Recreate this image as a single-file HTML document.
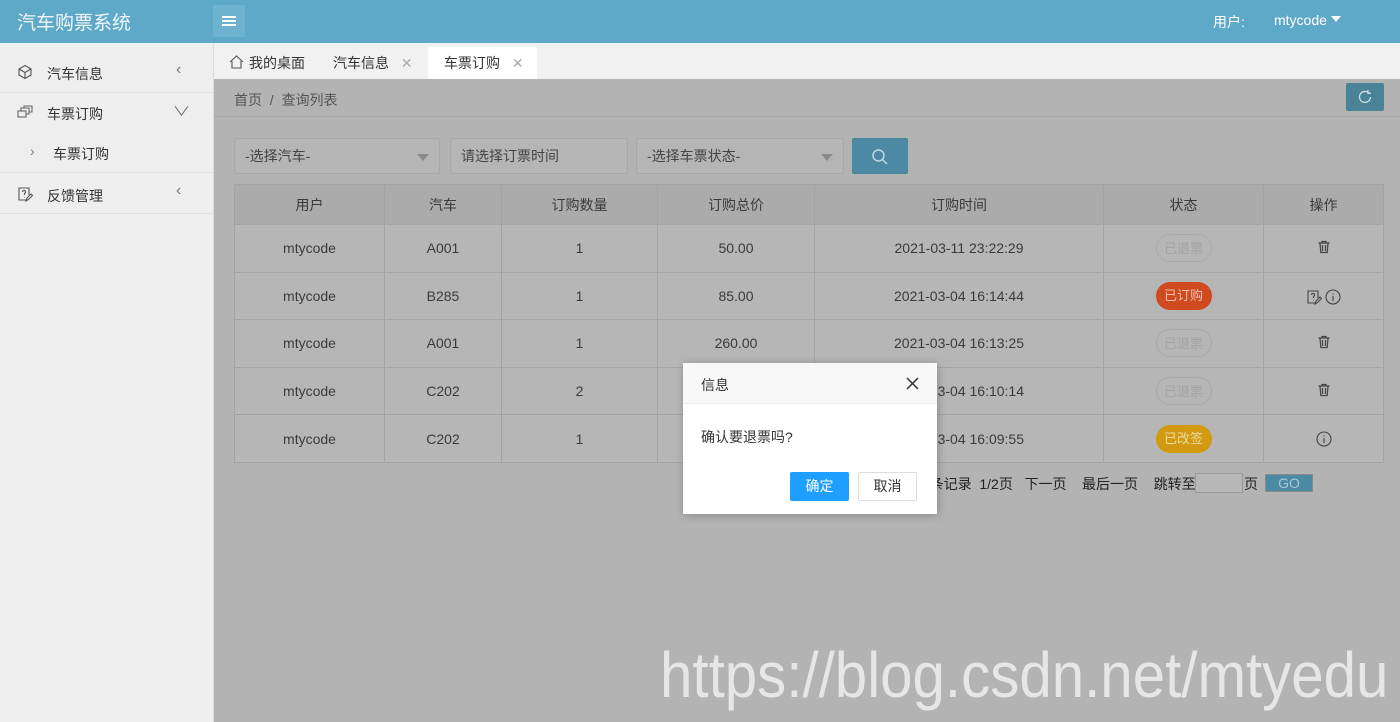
<!DOCTYPE html>
<html><head><meta charset="utf-8">
<style>
*{box-sizing:border-box;margin:0;padding:0}
body{width:1400px;height:722px;overflow:hidden;position:relative;font-family:"Liberation Sans","Noto Sans CJK SC",sans-serif;font-size:14px;color:#333;background:#b3b3b3}
.abs{position:absolute}
#hdr{left:0;top:0;width:1400px;height:43px;background:#5fa9c8}
#side{left:0;top:43px;width:214px;height:679px;background:#eeeeee;border-right:1px solid #ddd}
.mi{position:absolute;left:0;width:213px;border-bottom:1px solid #e0e0e0;font-size:14px;color:#333}
#tabs{left:214px;top:43px;width:1186px;height:36px;background:#f1f1f1}
.tab{position:absolute;top:4px;height:32px;line-height:32px;font-size:14px;color:#333}
#content{left:214px;top:79px;width:1186px;height:643px;background:#b3b3b3}
table{position:absolute;left:234px;top:184px;border-collapse:collapse;width:1150px}
td,th{border:1px solid #a3a3a3;text-align:center;font-weight:normal;color:#3a3a3a;font-size:14px}
th{height:40px;background:#ababab}
td{height:47.6px;background:#b6b6b6}
.badge{display:inline-block;width:56px;height:28px;line-height:28px;border-radius:14px;font-size:13px}
.inp{position:absolute;top:138px;height:36px;border:1px solid #a8a8a8;background:#b5b5b5;color:#444;font-size:14px;line-height:34px;padding-left:10px;border-radius:2px}
.tri{position:absolute;right:10px;top:15px;width:0;height:0;border-left:6px solid transparent;border-right:6px solid transparent;border-top:7px solid #8a8a8a}
</style></head><body>
<div id="hdr" class="abs">
 <div class="abs" style="left:17px;top:8px;color:#f0f7fa;font-size:19px">汽车购票系统</div>
 <div class="abs" style="left:213px;top:5px;width:32px;height:32px;background:#6db3d0">
  <div class="abs" style="left:9px;top:11px;width:14px;height:2px;background:#fff"></div>
  <div class="abs" style="left:9px;top:15px;width:14px;height:2px;background:#fff"></div>
  <div class="abs" style="left:9px;top:19px;width:14px;height:2px;background:#fff"></div>
 </div>
 <div class="abs" style="left:1213px;top:12px;color:#fff;font-size:14px">用户:</div>
 <div class="abs" style="left:1274px;top:12px;color:#fff;font-size:14px">mtycode</div>
 <div class="abs" style="left:1331px;top:16px;border-left:5px solid transparent;border-right:5px solid transparent;border-top:6px solid #fff"></div>
</div>
<div id="side" class="abs">
 <div class="mi" style="top:10px;height:40px">
  <svg class="abs" style="left:17px;top:11px" width="16" height="16" viewBox="0 0 16 16" fill="none" stroke="#555" stroke-width="1.1"><path d="M8 1.5 14 5v6l-6 3.5L2 11V5z M2 5l6 3.5L14 5 M8 8.5V14.5"/></svg>
  <span class="abs" style="left:47px;top:11px">汽车信息</span>
  <span class="abs" style="left:176px;top:8px;color:#777;font-size:16px">&lsaquo;</span>
 </div>
 <div class="mi" style="top:50px;height:80px">
  <svg class="abs" style="left:17px;top:12px" width="16" height="14" viewBox="0 0 16 14" fill="none" stroke="#666" stroke-width="1.1"><rect x="1" y="6" width="8" height="6"/><path d="M4 6V3h8v6h-3 M7 3V1h8v6h-3"/></svg>
  <span class="abs" style="left:47px;top:11px">车票订购</span>
  <span class="abs" style="left:175px;top:8px;color:#777;font-size:13px;transform:scaleX(1.4)">&#8744;</span>
  <span class="abs" style="left:30px;top:50px;color:#777;font-size:14px">&rsaquo;</span>
  <span class="abs" style="left:53px;top:51px">车票订购</span>
 </div>
 <div class="mi" style="top:131px;height:40px">
  <svg class="abs" style="left:17px;top:12px" width="16" height="16" viewBox="0 0 16 16" fill="none" stroke="#555" stroke-width="1.1"><path d="M11 14H2V2h10v7"/><path d="M5.5 6a1.5 1.5 0 1 1 2 1.4V9 M7.5 11v.5"/><path d="M9 15l1-3 4-4 1.5 1.5-4 4z"/></svg>
  <span class="abs" style="left:47px;top:12px">反馈管理</span>
  <span class="abs" style="left:176px;top:8px;color:#777;font-size:16px">&lsaquo;</span>
 </div>
</div>
<div id="tabs" class="abs">
 <div class="tab" style="left:0;width:103px;padding-left:35px">我的桌面
  <svg class="abs" style="left:15px;top:8px" width="15" height="14" viewBox="0 0 15 14" fill="none" stroke="#555" stroke-width="1.1"><path d="M1 7 7.5 1 14 7 M3 6v7h9V6"/></svg></div>
 <div class="tab" style="left:119px">汽车信息 <span style="color:#aaa;margin-left:8px">✕</span></div>
 <div class="tab" style="left:214px;width:109px;background:#fff;padding-left:16px">车票订购 <span style="color:#aaa;margin-left:8px">✕</span></div>
</div>
<div id="content" class="abs">
 <div class="abs" style="left:0;top:0;width:1186px;height:38px;border-bottom:1px solid #a8a8a8"></div>
 <div class="abs" style="left:20px;top:11px;color:#555;font-size:14px">首页 &nbsp;/&nbsp; 查询列表</div>
 <div class="abs" style="left:1132px;top:4px;width:38px;height:28px;background:#4a8398;border-radius:2px">
  <svg class="abs" style="left:11px;top:6px" width="16" height="16" viewBox="0 0 16 16" fill="none" stroke="#cfe0e6" stroke-width="1.3"><path d="M13.5 8A5.5 5.5 0 1 1 11.5 3.7"/><path d="M11 1v3.3h3"/></svg>
 </div>
</div>
<div class="inp" style="left:234px;width:206px">-选择汽车-<span class="tri"></span></div>
<div class="inp" style="left:450px;width:178px">请选择订票时间</div>
<div class="inp" style="left:636px;width:208px">-选择车票状态-<span class="tri"></span></div>
<div class="abs" style="left:852px;top:138px;width:56px;height:36px;background:#4b8aa2;border-radius:2px">
 <svg class="abs" style="left:19px;top:10px" width="18" height="18" viewBox="0 0 18 18" fill="none" stroke="#c4dbe5" stroke-width="1.4"><circle cx="7.5" cy="7.5" r="5.5"/><path d="M11.5 11.5 16 16"/></svg>
</div>
<svg width="0" height="0" style="position:absolute"><defs>
<symbol id="trash" viewBox="0 0 14 14"><g fill="none" stroke="#444" stroke-width="1.2"><path d="M1.5 3h11 M5 3V1.5h4V3 M3 3l.8 9.5h6.4L11 3 M5.5 5v6 M8.5 5v6"/></g></symbol>
<symbol id="info" viewBox="0 0 16 16"><g fill="none" stroke="#444" stroke-width="1.1"><circle cx="8" cy="8" r="7"/><path d="M8 7v5 M8 4.5v1"/></g></symbol>
</defs></svg>
<table>
<tr><th style="width:150px">用户</th><th style="width:117px">汽车</th><th style="width:156px">订购数量</th><th style="width:157px">订购总价</th><th style="width:289px">订购时间</th><th style="width:160px">状态</th><th>操作</th></tr>
<tr><td>mtycode</td><td>A001</td><td>1</td><td>50.00</td><td>2021-03-11 23:22:29</td><td><span class="badge" style="border:1px solid #aaa;color:#a3a3a3">已退票</span></td><td><svg width="14" height="14"><use href="#trash"/></svg></td></tr>
<tr><td>mtycode</td><td>B285</td><td>1</td><td>85.00</td><td>2021-03-04 16:14:44</td><td><span class="badge" style="background:#cf4a1f;color:#ecc0b0">已订购</span></td><td>
<svg width="16" height="16" viewBox="0 0 16 16" fill="none" stroke="#444" stroke-width="1.1" style="vertical-align:middle"><path d="M11 14H2V2h10v7"/><path d="M5.5 6a1.5 1.5 0 1 1 2 1.4V9 M7.5 11v.5"/><path d="M9 15l1-3 4-4 1.5 1.5-4 4z"/></svg>
<svg width="16" height="16" style="vertical-align:middle"><use href="#info"/></svg></td></tr>
<tr><td>mtycode</td><td>A001</td><td>1</td><td>260.00</td><td>2021-03-04 16:13:25</td><td><span class="badge" style="border:1px solid #aaa;color:#a3a3a3">已退票</span></td><td><svg width="14" height="14"><use href="#trash"/></svg></td></tr>
<tr><td>mtycode</td><td>C202</td><td>2</td><td>170.00</td><td>2021-03-04 16:10:14</td><td><span class="badge" style="border:1px solid #aaa;color:#a3a3a3">已退票</span></td><td><svg width="14" height="14"><use href="#trash"/></svg></td></tr>
<tr><td>mtycode</td><td>C202</td><td>1</td><td>85.00</td><td>2021-03-04 16:09:55</td><td><span class="badge" style="background:#d29a12;color:#eed9a0">已改签</span></td><td>
<svg width="16" height="16" style="vertical-align:middle"><use href="#info"/></svg></td></tr>
</table>
<div class="abs" style="left:900px;top:474px;font-size:14px;color:#222;white-space:nowrap">共10条记录&nbsp;&nbsp;1/2页&nbsp;&nbsp;&nbsp;下一页&nbsp;&nbsp;&nbsp;&nbsp;最后一页&nbsp;&nbsp;&nbsp;&nbsp;跳转至</div>
<div class="abs" style="left:1195px;top:473px;width:48px;height:20px;border:1px solid #999;background:#b7b7b7"></div>
<div class="abs" style="left:1244px;top:474px;font-size:14px;color:#222">页</div>
<div class="abs" style="left:1265px;top:474px;width:48px;height:18px;background:#4b8aa2;border:1px solid #8a8a8a;color:#a7c8d6;text-align:center;line-height:16px;font-size:14px">GO</div>
<div class="abs" style="left:683px;top:363px;width:254px;height:151px;background:#fff;box-shadow:1px 1px 8px rgba(0,0,0,.25)">
 <div class="abs" style="left:0;top:0;width:254px;height:41px;background:#f8f8f8;border-bottom:1px solid #eee"></div>
 <div class="abs" style="left:18px;top:12px;font-size:14px;color:#333">信息</div>
 <svg class="abs" style="left:223px;top:14px" width="13" height="13" viewBox="0 0 13 13" stroke="#333" stroke-width="1.5"><path d="M1 1l11 11M12 1 1 12"/></svg>
 <div class="abs" style="left:18px;top:64px;font-size:14px;color:#333">确认要退票吗?</div>
 <div class="abs" style="left:107px;top:109px;width:59px;height:29px;background:#1e9fff;color:#fff;text-align:center;line-height:29px;border-radius:2px">确定</div>
 <div class="abs" style="left:175px;top:109px;width:59px;height:29px;border:1px solid #ddd;color:#333;text-align:center;line-height:27px;border-radius:2px">取消</div>
</div>
<div class="abs" style="left:660px;top:638px;font-size:64px;color:#e6e6e6;white-space:nowrap;line-height:74px;transform:scaleX(0.91);transform-origin:0 0">https://blog.csdn.net/mtyedu</div>
</body></html>
